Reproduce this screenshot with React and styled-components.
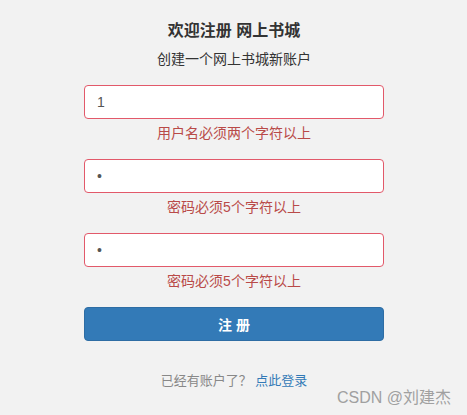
import styled, { createGlobalStyle } from 'styled-components';

const GlobalStyle = createGlobalStyle`
  html, body {
    margin: 0;
    padding: 0;
    background: #f2f2f2;
  }
  body {
    font-family: "Liberation Sans", "Noto Sans CJK SC", sans-serif;
  }
`;

const FIELDS = [
  { id: 'username', type: 'text', value: '1', error: '用户名必须两个字符以上' },
  { id: 'password', type: 'password', value: '1', error: '密码必须5个字符以上' },
  { id: 'confirm', type: 'password', value: '1', error: '密码必须5个字符以上' },
];

const App = () => {
  return (
    <Page>
      <GlobalStyle />
      <Form onSubmit={(e) => e.preventDefault()}>
        <Title>欢迎注册 网上书城</Title>
        <Subtitle>创建一个网上书城新账户</Subtitle>
        <Fields>
          {FIELDS.map((field) => (
            <Field key={field.id}>
              <Input type={field.type} value={field.value} readOnly $invalid />
              <ErrorText>{field.error}</ErrorText>
            </Field>
          ))}
        </Fields>
        <SubmitButton type="submit">注 册</SubmitButton>
        <Footer>
          已经有账户了？ <LoginLink href="#">点此登录</LoginLink>
        </Footer>
      </Form>
      <Watermark>CSDN @刘建杰</Watermark>
    </Page>
  );
};

// ============================================
// STYLED COMPONENTS
// ============================================

const Page = styled.div`
  position: relative;
  width: 467px;
  height: 415px;
  display: flex;
  justify-content: center;
  overflow: hidden;
`;

const Form = styled.form`
  width: 300px;
  display: flex;
  flex-direction: column;
  align-items: stretch;
  padding-top: 20px;
  margin-left: 1px;
`;

const Title = styled.h2`
  margin: 0;
  font-size: 16px;
  line-height: 22px;
  font-weight: 700;
  color: #333;
  text-align: center;
`;

const Subtitle = styled.p`
  margin: 7px 0 0;
  font-size: 14px;
  line-height: 20px;
  color: #333;
  text-align: center;
`;

const Fields = styled.div`
  display: flex;
  flex-direction: column;
  gap: 16px;
  margin-top: 16px;
`;

const Field = styled.div`
  display: flex;
  flex-direction: column;
  gap: 4px;
`;

const Input = styled.input`
  box-sizing: border-box;
  width: 100%;
  height: 34px;
  padding: 0 12px;
  font-family: inherit;
  font-size: 14px;
  color: #555;
  background: #fff;
  border: 1px solid ${({ $invalid }) => ($invalid ? '#e2596a' : '#ccc')};
  border-radius: 4px;
  outline: none;
`;

const ErrorText = styled.span`
  font-size: 14px;
  line-height: 20px;
  color: #b94a48;
  text-align: center;
`;

const SubmitButton = styled.button`
  margin-top: 16px;
  height: 34px;
  border: 1px solid #2e6da4;
  border-radius: 4px;
  background: #337ab7;
  color: #fff;
  font-family: inherit;
  font-size: 14px;
  font-weight: 700;
  cursor: pointer;
`;

const Footer = styled.p`
  margin: 30px 0 0;
  font-size: 13px;
  line-height: 20px;
  color: #888;
  text-align: center;
`;

const LoginLink = styled.a`
  color: #337ab7;
  text-decoration: none;
`;

const Watermark = styled.span`
  position: absolute;
  right: 16px;
  bottom: 7px;
  font-size: 16px;
  line-height: 20px;
  color: #a0a0a0;
`;

export default App;
